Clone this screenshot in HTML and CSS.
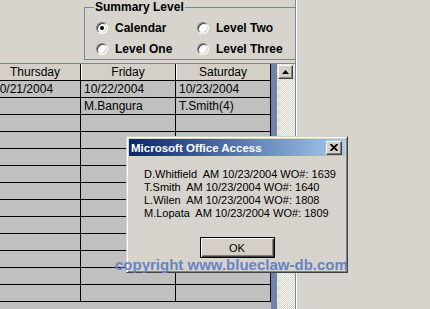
FILE: index.html
```
<!DOCTYPE html>
<html lang="en">
<head>
    <meta charset="UTF-8">
    <title>Work Order Calendar</title>
    <link rel="stylesheet" href="styles.css">
</head>
<body>

<div class="screen">
    <div class="pane">
        <div class="toolbar">
            <fieldset class="summary">
                <legend>Summary Level</legend>
                <label class="opt"><span class="radio checked"></span>Calendar</label>
                <label class="opt"><span class="radio"></span>Level Two</label>
                <label class="opt"><span class="radio"></span>Level One</label>
                <label class="opt"><span class="radio"></span>Level Three</label>
            </fieldset>
        </div>

        <div class="grid">
            <div class="sheet">
                <div class="row head">
                    <div class="cell">Thursday</div>
                    <div class="cell">Friday</div>
                    <div class="cell">Saturday</div>
                </div>
                <div class="row">
                    <div class="cell">10/21/2004</div>
                    <div class="cell">10/22/2004</div>
                    <div class="cell">10/23/2004</div>
                </div>
                <div class="row">
                    <div class="cell"></div>
                    <div class="cell">M.Bangura</div>
                    <div class="cell">T.Smith(4)</div>
                </div>
                <div class="row"><div class="cell"></div><div class="cell"></div><div class="cell"></div></div>
                <div class="row"><div class="cell"></div><div class="cell"></div><div class="cell"></div></div>
                <div class="row"><div class="cell"></div><div class="cell"></div><div class="cell"></div></div>
                <div class="row"><div class="cell"></div><div class="cell"></div><div class="cell"></div></div>
                <div class="row"><div class="cell"></div><div class="cell"></div><div class="cell"></div></div>
                <div class="row"><div class="cell"></div><div class="cell"></div><div class="cell"></div></div>
                <div class="row"><div class="cell"></div><div class="cell"></div><div class="cell"></div></div>
                <div class="row"><div class="cell"></div><div class="cell"></div><div class="cell"></div></div>
                <div class="row"><div class="cell"></div><div class="cell"></div><div class="cell"></div></div>
                <div class="row"><div class="cell"></div><div class="cell"></div><div class="cell"></div></div>
                <div class="row"><div class="cell"></div><div class="cell"></div><div class="cell"></div></div>
            </div>
            <div class="edge"></div>
            <div class="scroll">
                <div class="up">
                    <svg width="7" height="4" viewBox="0 0 7 4"><path d="M3.5 0 L7 4 L0 4 Z" fill="#000"/></svg>
                </div>
            </div>
        </div>
    </div>

    <div class="dialog">
        <div class="titlebar">
            <span class="title">Microsoft Office Access</span>
            <span class="close">
                <svg width="8" height="7" viewBox="0 0 8 7"><path d="M0.5 0 L7.5 7 M7.5 0 L0.5 7" stroke="#000" stroke-width="1.8"/></svg>
            </span>
        </div>
        <div class="message">D.Whitfield  AM 10/23/2004 WO#: 1639
T.Smith  AM 10/23/2004 WO#: 1640
L.Wilen  AM 10/23/2004 WO#: 1808
M.Lopata  AM 10/23/2004 WO#: 1809</div>
        <div class="actions">
            <button class="ok">OK</button>
        </div>
    </div>

    <div class="watermark">copyright www.blueclaw-db.com</div>
</div>

</body>
</html>
```

FILE: styles.css
```
body {
    margin: 0;
    padding: 0;
    background-color: #d7d4cd;
    font-family: "Liberation Sans", Arial, sans-serif;
    color: #000;
}
.screen {
    position: relative;
    width: 430px;
    height: 309px;
    overflow: hidden;
}
.pane {
    width: 295px;
    height: 309px;
    border-right: 1px solid #7686aa;
    box-shadow: 1px 0 0 #fff;
    overflow: hidden;
}
.toolbar {
    height: 63px;
    padding-left: 84px;
}
.summary {
    margin: 0;
    padding: 3px 0 0 11px;
    height: 60px;
    box-sizing: border-box;
    border: 1px solid #7686aa;
    border-right: none;
    display: grid;
    grid-template-columns: 101px 100px;
    grid-template-rows: 21px 21px;
}
.summary legend {
    font-size: 12px;
    font-weight: bold;
    line-height: 14px;
    padding: 0 1px;
    margin-left: -2px;
}
.opt {
    display: flex;
    align-items: center;
    gap: 7px;
    font-size: 12px;
    font-weight: bold;
}
.radio {
    position: relative;
    width: 12px;
    height: 12px;
    box-sizing: border-box;
    border-radius: 50%;
    background: #fff;
    border: 1px solid;
    border-color: #808080 #fff #fff #808080;
    box-shadow: inset 1px 1px 0 #404040, inset -1px -1px 0 #d4d0c8;
}
.radio.checked::after {
    content: "";
    position: absolute;
    left: 3px;
    top: 3px;
    width: 4px;
    height: 4px;
    border-radius: 50%;
    background: #000;
}
.grid {
    display: flex;
    border-top: 1px solid #7686aa;
    height: 245px;
}
.sheet {
    margin-left: -10px;
    width: 281px;
    background: #c0c0c0;
}
.row {
    display: grid;
    grid-template-columns: 91px 95px 95px;
    height: 17px;
    box-sizing: border-box;
    border-bottom: 1px solid #000;
}
.cell {
    border-right: 1px solid #000;
    padding-left: 3px;
    font-size: 12px;
    line-height: 16px;
    white-space: nowrap;
    overflow: hidden;
}
.head {
    background: #d4d0c8;
}
.head .cell {
    text-align: center;
    padding-left: 0;
    box-shadow: inset 1px 0 0 #fff;
}
.edge {
    width: 6px;
    background: #6f83ab;
}
.scroll {
    width: 18px;
    background: repeating-conic-gradient(#fff 0 25%, #d4d0c8 0 50%) 0 0 / 2px 2px;
}
.up {
    margin: 1px 0 0 1px;
    width: 15px;
    height: 14px;
    box-sizing: border-box;
    background: #d4d0c8;
    border: 1px solid;
    border-color: #fff #404040 #404040 #fff;
    box-shadow: inset -1px -1px 0 #808080;
    display: flex;
    align-items: center;
    justify-content: center;
}
.dialog {
    position: absolute;
    left: 126px;
    top: 136px;
    width: 222px;
    height: 137px;
    box-sizing: border-box;
    padding: 2px;
    background: #d6d3cc;
    border: 1px solid;
    border-color: #d4d0c8 #404040 #404040 #d4d0c8;
    box-shadow: inset 1px 1px 0 #fff, inset -1px -1px 0 #808080;
}
.titlebar {
    height: 17px;
    background: linear-gradient(to right, #0a246a, #a6caf0);
    display: flex;
    align-items: center;
    justify-content: space-between;
    padding: 0 3px 0 2px;
}
.title {
    color: #fff;
    font-size: 11.5px;
    font-weight: bold;
}
.close {
    width: 16px;
    height: 14px;
    box-sizing: border-box;
    background: #d4d0c8;
    border: 1px solid;
    border-color: #fff #404040 #404040 #fff;
    box-shadow: inset -1px -1px 0 #808080;
    display: flex;
    align-items: center;
    justify-content: center;
}
.message {
    margin: 12px 0 0 15px;
    font-size: 11px;
    line-height: 13px;
    white-space: pre;
}
.actions {
    display: flex;
    justify-content: center;
    margin-top: 17px;
}
.ok {
    width: 75px;
    height: 21px;
    padding: 0;
    font-family: "Liberation Sans", Arial, sans-serif;
    font-size: 11px;
    color: #000;
    background: #d4d0c8;
    border: 1px solid #000;
    box-shadow: inset 1px 1px 0 #fff, inset -1px -1px 0 #404040, inset -2px -2px 0 #808080;
}
.watermark {
    position: absolute;
    left: 115px;
    top: 257px;
    font-size: 15px;
    line-height: 15px;
    font-weight: bold;
    color: #6784c4;
    white-space: nowrap;
}
```
